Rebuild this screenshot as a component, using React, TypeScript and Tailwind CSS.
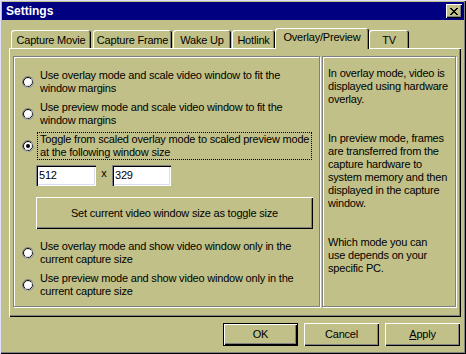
import React from "react";

const FACE = "#c0c088";

function Radio({ checked = false }: { checked?: boolean }) {
  return (
    <svg width="12" height="12" viewBox="0 0 12 12" className="shrink-0">
      <circle cx="6" cy="6" r="5.5" fill="none" stroke="#808080" strokeWidth="1" />
      <path d="M10.5 3.5 A5.5 5.5 0 0 1 3.5 10.5" fill="none" stroke="#ffffff" strokeWidth="1.2" />
      <circle cx="6" cy="6" r="4.5" fill="#ffffff" stroke="#000000" strokeWidth="1" />
      <path d="M9.3 3.2 A4.5 4.5 0 0 1 3.2 9.3" fill="none" stroke="#dcdcf0" strokeWidth="1" />
      {checked && <circle cx="6" cy="6" r="2" fill="#000" />}
    </svg>
  );
}

function RadioRow({
  lines,
  checked = false,
  focus = false,
  className = "",
}: {
  lines: string[];
  checked?: boolean;
  focus?: boolean;
  className?: string;
}) {
  return (
    <div className={`flex items-center pl-[8px] h-[26px] ${className}`}>
      <Radio checked={checked} />
      <div
        className={`ml-[4px] px-[2px] leading-[13px] ${
          focus ? "outline outline-1 outline-dotted outline-black w-[273px]" : ""
        }`}
      >
        {lines.map((l, i) => (
          <div key={i} className="whitespace-nowrap">
            {l}
          </div>
        ))}
      </div>
    </div>
  );
}

function Tab({ label, w, selected = false }: { label: string; w: number; selected?: boolean }) {
  return (
    <div
      style={{ width: w }}
      className={
        selected
          ? "h-[21px] -mb-[1px] relative z-10 bg-[#c0c088] rounded-t-[3px] shadow-[inset_1px_1px_0_#ffffff,inset_-1px_0_0_#000000,inset_-2px_0_0_#808080] flex items-start justify-center pt-[3px]"
          : "h-[18px] bg-[#c0c088] rounded-t-[3px] shadow-[inset_1px_1px_0_#ffffff,inset_-1px_0_0_#000000,inset_-2px_0_0_#808080] flex items-start justify-center pt-[4px]"
      }
    >
      <span className="leading-[13px] whitespace-nowrap">{label}</span>
    </div>
  );
}

const raised =
  "bg-[#c0c088] shadow-[inset_1px_1px_0_#ffffff,inset_-1px_-1px_0_#000000,inset_-2px_-2px_0_#808080]";

export default function App() {
  return (
    <div
      className="w-[466px] h-[354px] bg-[#c0c088] flex flex-col pt-[2px] px-[2px] text-[11px] tracking-[-0.2px] text-black font-['Liberation_Sans',Arial,sans-serif] shadow-[inset_1px_1px_0_#e0e0ff,inset_-1px_-1px_0_#000000,inset_-2px_-2px_0_#808080] overflow-hidden"
      style={{ backgroundColor: FACE }}
    >
      {/* Title bar */}
      <div className="h-[18px] bg-[#000080] flex items-center justify-between pl-[4px] pr-[2px] shrink-0">
        <span className="text-white font-bold text-[12px] leading-[14px] tracking-normal">Settings</span>
        <div className={`w-[16px] h-[14px] flex items-center justify-center ${raised}`}>
          <svg width="8" height="7" viewBox="0 0 8 7" shapeRendering="crispEdges">
            <path
              d="M0 0h2v1H0zM6 0h2v1H6zM1 1h2v1H1zM5 1h2v1H5zM2 2h4v1H2zM3 3h2v1H3zM2 4h4v1H2zM1 5h2v1H1zM5 5h2v1H5zM0 6h2v1H0zM6 6h2v1H6z"
              fill="#000"
            />
          </svg>
        </div>
      </div>

      {/* Tabs */}
      <div className="mt-[8px] ml-[9px] flex items-end h-[20px] shrink-0">
        <Tab label="Capture Movie" w={80} />
        <div className="w-[2px]" />
        <Tab label="Capture Frame" w={79} />
        <div className="w-[1px]" />
        <Tab label="Wake Up" w={58} />
        <div className="w-[1px]" />
        <Tab label="Hotlink" w={43} />
        <Tab label="Overlay/Preview" w={94} selected />
        <Tab label="TV" w={40} />
      </div>

      {/* Panel */}
      <div className="ml-[7px] w-[452px] h-[269px] shrink-0 flex gap-[2px] pl-[4px] pt-[8px] shadow-[inset_1px_1px_0_#ffffff,inset_-1px_-1px_0_#000000,inset_-2px_-2px_0_#808080]">
        {/* Left group */}
        <div className="w-[307px] h-[251px] border border-[#808080] shadow-[inset_1px_1px_0_#ffffff,1px_1px_0_#ffffff] flex flex-col">
          <RadioRow
            className="mt-[12px]"
            lines={["Use overlay mode and scale video window to fit the", "window margins"]}
          />
          <RadioRow
            className="mt-[6px]"
            lines={["Use preview mode and scale video window to fit the", "window margins"]}
          />
          <RadioRow
            className="mt-[6px]"
            checked
            focus
            lines={[
              "Toggle from scaled overlay mode to scaled preview mode",
              "at the following window size",
            ]}
          />
          <div className="mt-[6px] ml-[22px] flex items-center h-[21px]">
            <div className="w-[60px] h-[21px] bg-white shadow-[inset_1px_1px_0_#808080,inset_2px_2px_0_#000000,inset_-1px_-1px_0_#ffffff,inset_-2px_-2px_0_#dcdcf0] pl-[3px] pt-[4px] leading-[13px]">
              512
            </div>
            <span className="w-[16px] text-center leading-[13px] -mt-[4px]">x</span>
            <div className="w-[59px] h-[21px] bg-white shadow-[inset_1px_1px_0_#808080,inset_2px_2px_0_#000000,inset_-1px_-1px_0_#ffffff,inset_-2px_-2px_0_#dcdcf0] pl-[3px] pt-[4px] leading-[13px]">
              329
            </div>
          </div>
          <div
            className={`mt-[11px] ml-[22px] w-[277px] h-[32px] flex items-center justify-center ${raised}`}
          >
            <span className="leading-[13px]">Set current video window size as toggle size</span>
          </div>
          <RadioRow
            className="mt-[11px]"
            lines={["Use overlay mode and show video window only in the", "current capture size"]}
          />
          <RadioRow
            className="mt-[6px]"
            lines={["Use preview mode and show video window only in the", "current capture size"]}
          />
        </div>

        {/* Right group */}
        <div className="w-[134px] h-[251px] border border-[#808080] shadow-[inset_1px_1px_0_#ffffff,1px_1px_0_#ffffff] pl-[5px] pt-[10px] leading-[13px]">
          <div>
            In overlay mode, video is
            <br />
            displayed using hardware
            <br />
            overlay.
          </div>
          <div className="mt-[26px]">
            In preview mode, frames
            <br />
            are transferred from the
            <br />
            capture hardware to
            <br />
            system memory and then
            <br />
            displayed in the capture
            <br />
            window.
          </div>
          <div className="mt-[26px]">
            Which mode you can
            <br />
            use depends on your
            <br />
            specific PC.
          </div>
        </div>
      </div>

      {/* Buttons */}
      <div className="mt-[6px] mr-[4px] flex justify-end gap-[6px] shrink-0">
        <div className="w-[75px] h-[23px] bg-[#c0c088] shadow-[inset_0_0_0_1px_#000000,inset_2px_2px_0_#ffffff,inset_-2px_-2px_0_#000000,inset_-3px_-3px_0_#808080] flex items-center justify-center">
          <span className="leading-[13px]">OK</span>
        </div>
        <div className={`w-[75px] h-[23px] flex items-center justify-center ${raised}`}>
          <span className="leading-[13px]">Cancel</span>
        </div>
        <div className={`w-[75px] h-[23px] flex items-center justify-center ${raised}`}>
          <span className="leading-[13px]">
            <span className="underline">A</span>pply
          </span>
        </div>
      </div>
    </div>
  );
}
